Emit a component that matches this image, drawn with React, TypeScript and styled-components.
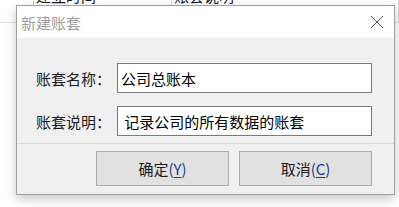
import styled, { createGlobalStyle } from 'styled-components'

const GlobalStyle = createGlobalStyle`
  html, body {
    margin: 0;
    padding: 0;
    background: #fff;
  }
  body {
    font-family: "Noto Sans CJK SC", "Noto Sans", sans-serif;
  }
`

const App = () => {
  return (
    <Screen>
      <GlobalStyle />
      <BackHeader>
        <BackCell $width={34} />
        <BackCell $width={138}>
          <span>建立时间</span>
        </BackCell>
        <BackCell $width={227}>
          <span>账套说明</span>
        </BackCell>
      </BackHeader>

      <Dialog>
        <TitleBar>
          <Title>新建账套</Title>
          <CloseButton aria-label="关闭">
            <svg width="14" height="14" viewBox="0 0 14 14">
              <path d="M1 1 L13 13 M13 1 L1 13" stroke="#555" strokeWidth="1" fill="none" />
            </svg>
          </CloseButton>
        </TitleBar>

        <Form>
          <Row>
            <Label>账套名称：</Label>
            <Input defaultValue="公司总账本" />
          </Row>
          <Row>
            <Label>账套说明：</Label>
            <Input defaultValue=" 记录公司的所有数据的账套" />
          </Row>
        </Form>

        <Footer>
          <Button>
            确定<Key>(<u>Y</u>)</Key>
          </Button>
          <Button>
            取消<Key>(<u>C</u>)</Key>
          </Button>
        </Footer>
      </Dialog>
    </Screen>
  )
}

export default App

const Screen = styled.div`
  position: relative;
  width: 399px;
  height: 207px;
  overflow: hidden;
  background: #fff;
`

const BackHeader = styled.div`
  display: flex;
  height: 22px;
  border-bottom: 1px solid #e3e3e3;
`

const BackCell = styled.div<{ $width: number }>`
  width: ${p => p.$width}px;
  flex: none;
  border-right: 1px solid #d6d6d6;
  box-sizing: border-box;
  overflow: hidden;
  span {
    display: block;
    margin-top: -13px;
    padding-left: 2px;
    font-size: 15px;
    line-height: 18px;
    color: #1a1a1a;
  }
`

const Dialog = styled.div`
  position: absolute;
  left: 16px;
  top: 5px;
  width: 379px;
  height: 190px;
  box-sizing: border-box;
  border: 1px solid #a0a0a0;
  background: #f0f0f0;
  display: flex;
  flex-direction: column;
  box-shadow: 0 4px 10px rgba(0, 0, 0, 0.22);
`

const TitleBar = styled.div`
  height: 32px;
  background: #fff;
  display: flex;
  align-items: center;
  justify-content: space-between;
  padding-left: 4px;
`

const Title = styled.div`
  font-size: 15px;
  color: #a0a0a0;
`

const CloseButton = styled.div`
  width: 34px;
  height: 32px;
  display: flex;
  align-items: center;
  justify-content: center;
`

const Form = styled.div`
  display: flex;
  flex-direction: column;
  gap: 13px;
  padding: 25px 22px 7px 0;
  border-bottom: 1px solid #d9d9d9;
`

const Row = styled.div`
  display: flex;
  align-items: center;
`

const Label = styled.div`
  width: 100px;
  box-sizing: border-box;
  padding-right: 6px;
  text-align: right;
  font-size: 15px;
  color: #1a1a1a;
  white-space: pre;
`

const Input = styled.input`
  flex: 1;
  height: 30px;
  box-sizing: border-box;
  border: 1px solid #7a7a7a;
  background: #fff;
  padding: 0 3px;
  font-family: "Noto Sans CJK SC", "Noto Sans", sans-serif;
  font-size: 15px;
  color: #000;
  outline: none;
`

const Footer = styled.div`
  flex: 1;
  display: flex;
  justify-content: flex-end;
  align-items: flex-start;
  gap: 10px;
  padding: 7px 22px 0 0;
`

const Button = styled.div`
  width: 133px;
  height: 35px;
  box-sizing: border-box;
  border: 1px solid #adadad;
  background: #e1e1e1;
  display: flex;
  align-items: center;
  justify-content: center;
  font-size: 15px;
  color: #1a1a1a;
`

const Key = styled.span`
  color: #1a3b8c;
  u {
    text-decoration-thickness: 1px;
    text-underline-offset: 2px;
  }
`
